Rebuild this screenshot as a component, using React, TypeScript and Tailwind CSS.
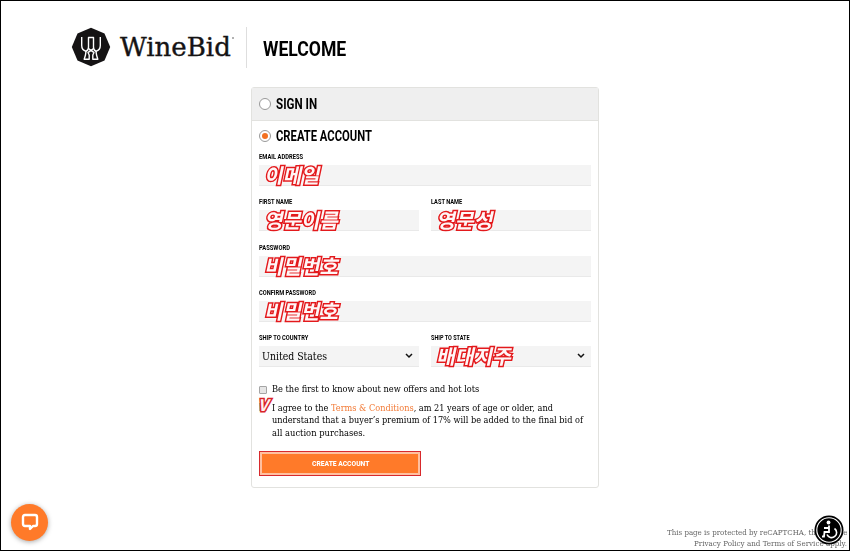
import { useLayoutEffect, useRef } from "react";
import type { ReactNode } from "react";
import { clsx } from "clsx";

interface FitProps {
  width: number;
  className?: string;
  children: ReactNode;
}

// Squeezes a single line of text into a given width.
function Fit({ width, className, children }: FitProps) {
  const ref = useRef<HTMLSpanElement>(null);

  useLayoutEffect(() => {
    const el = ref.current;
    if (el) el.style.transform = `scaleX(${width / el.offsetWidth})`;
  }, [width]);

  return (
    <span className={clsx("block whitespace-nowrap", className)} style={{ width }}>
      <span ref={ref} className="inline-block origin-left">
        {children}
      </span>
    </span>
  );
}

const heading = "font-['Roboto','Liberation_Sans',sans-serif] font-bold text-black";
const serif = "font-['DejaVu_Serif','Liberation_Serif',serif]";

function Note({ width, children }: { width: number; children: ReactNode }) {
  return (
    <Fit
      width={width}
      className="ml-[7px] font-['Noto_Sans_CJK_KR',sans-serif] text-[20px] leading-[20px] font-bold text-[#fff6f6] [-webkit-text-stroke:3px_#e3191c] [paint-order:stroke_fill] drop-shadow-[0_0_1px_#fff]"
    >
      <span className="inline-block -skew-x-12">{children}</span>
    </Fit>
  );
}

interface FieldProps {
  label: string;
  labelWidth: number;
  select?: boolean;
  children?: ReactNode;
}

function Field({ label, labelWidth, select, children }: FieldProps) {
  return (
    <div className="flex h-[45.25px] min-w-0 flex-1 flex-col">
      <Fit width={labelWidth} className={clsx(heading, "h-3.5 text-[7.5px] leading-3")}>
        {label}
      </Fit>
      <div className="flex h-[21px] items-center justify-between border-b border-[#e9e9e9] bg-[#f4f4f4] pr-1.5">
        {children}
        {select && (
          <svg viewBox="0 0 8 6" className="h-1.5 w-2" fill="none" stroke="#111" strokeWidth="1.5">
            <path d="M1 1l3 3 3-3" />
          </svg>
        )}
      </div>
    </div>
  );
}

function Logo() {
  return (
    <svg viewBox="0 0 40 40" className="h-10 w-10" fill="none">
      <path d="M20 .8 33.5 6.4 39.2 20 33.5 33.6 20 39.2 6.5 33.6.8 20 6.5 6.4Z" fill="#151314" />
      <g stroke="#fff" strokeWidth="1.4" strokeLinejoin="round">
        <path d="M10.7 10v8.500c0 3.200 1.500 5 4.300 5.700 2.800-.7 2.500-2.700 2.500-4.700v-9h5v9c0 2 -.3 4 2.500 4.700 2.800-.7 4.300-2.500 4.300-5.700v-8.500" />
        <path d="M17.800 21.500c.6 1.500 3.700 2.500 5.200 4l-1.200 2.500v4.300h5l-1.300-4.300-.5-3.800M22.200 21.500c-.6 1.500-3.700 2.500-5.200 4l1.200 2.500v4.300h-5l1.300-4.300.5-3.800" />
      </g>
    </svg>
  );
}

export default function App() {
  return (
    <div className="relative h-[551px] w-[850px] overflow-hidden border border-black bg-white">
      <header className="flex h-[86px] items-start pt-[26px] pl-[70px]">
        <Logo />
        <Fit
          width={111}
          className={clsx(serif, "ml-[9px] text-[26px] leading-[41px] text-[#151314] [-webkit-text-stroke:0.4px_#151314]")}
        >
          WineBid
        </Fit>
        <span className="mt-2.5 ml-px h-0.5 w-0.5 rounded-full bg-[#999]" />
        <div className="ml-3 h-[41px] w-px bg-[#dedede]" />
        <Fit width={83} className={clsx(heading, "ml-4 text-[21px] leading-[44px]")}>
          WELCOME
        </Fit>
      </header>

      <main className="ml-[250px] h-[401px] w-[348px] rounded-[3px] border border-[#e2e2df] bg-white">
        <div className="flex h-[33px] items-center border-b border-[#e2e2df] bg-[#efefef] pl-[7px]">
          <span className="h-3 w-3 rounded-full border border-[#999] bg-white" />
          <Fit width={41} className={clsx(heading, "ml-[5px] text-[15px] leading-5")}>
            SIGN IN
          </Fit>
        </div>

        <div className="px-[7px]">
          <div className="flex h-[30px] items-center">
            <span className="flex h-3 w-3 items-center justify-center rounded-full border border-[#999] bg-white">
              <span className="h-1.5 w-1.5 rounded-full bg-[#f37021]" />
            </span>
            <Fit width={96} className={clsx(heading, "ml-[5px] text-[15px] leading-5")}>
              CREATE ACCOUNT
            </Fit>
          </div>

          <Field label="EMAIL ADDRESS" labelWidth={44}>
            <Note width={55}>이메일</Note>
          </Field>
          <div className="flex gap-3">
            <Field label="FIRST NAME" labelWidth={33}>
              <Note width={74}>영문이름</Note>
            </Field>
            <Field label="LAST NAME" labelWidth={31}>
              <Note width={56}>영문성</Note>
            </Field>
          </div>
          <Field label="PASSWORD" labelWidth={31}>
            <Note width={74}>비밀번호</Note>
          </Field>
          <Field label="CONFIRM PASSWORD" labelWidth={57}>
            <Note width={74}>비밀번호</Note>
          </Field>
          <div className="flex gap-3">
            <Field label="SHIP TO COUNTRY" labelWidth={49} select>
              <Fit width={65} className={clsx(serif, "ml-[3px] text-[10.5px] leading-5 text-black")}>
                United States
              </Fit>
            </Field>
            <Field label="SHIP TO STATE" labelWidth={39} select>
              <Note width={75}>배대지주</Note>
            </Field>
          </div>

          <div className={clsx(serif, "pt-1.5 text-[9px] leading-[12.5px] text-black")}>
            <div className="flex items-center">
              <span className="mr-[5px] h-2 w-2 rounded-[1px] border border-[#a5a5a5] bg-[#e6e6e6]" />
              <Fit width={207}>Be the first to know about new offers and hot lots</Fit>
            </div>
            <div className="relative mt-1.5 pl-[13px]">
              <span className="absolute top-[1px] left-0 h-2 w-2 border border-[#bbb] bg-[#eee]" />
              <span className="absolute -top-[5px] -left-px font-['Noto_Sans_CJK_KR',sans-serif] text-[16px] leading-[14px] font-bold text-[#fff0f0] italic [-webkit-text-stroke:3px_#d92327] [paint-order:stroke_fill]">
                V
              </span>
              <Fit width={281}>
                I agree to the <span className="text-[#f27a36]">Terms &amp; Conditions</span>, am 21 years of age or older, and
              </Fit>
              <Fit width={311}>understand that a buyer’s premium of 17% will be added to the final bid of</Fit>
              <Fit width={93}>all auction purchases.</Fit>
            </div>
          </div>

          <button className="mt-3 flex h-[25px] w-[162px] border border-[#d8292c] bg-[#ffc0a0] p-0.5">
            <span className="flex h-full w-full items-center justify-center bg-[#ff7a29]">
              <Fit width={57} className="text-left font-['Roboto',sans-serif] text-[8px] leading-3 font-extrabold text-white">
                CREATE ACCOUNT
              </Fit>
            </span>
          </button>
        </div>
      </main>

      <div className="absolute bottom-[9.5px] left-[10px] flex h-[37px] w-[37px] items-center justify-center rounded-full bg-[#ff7a29] shadow-[0_1px_5px_rgba(0,0,0,0.35)]">
        <svg viewBox="0 0 20 20" className="h-5 w-5" fill="none" stroke="#fff" strokeWidth="2.4" strokeLinejoin="round">
          <path d="M5 3h10q2 0 2 2v7q0 2-2 2h-2l-3 3v-3H5q-2 0-2-2V5q0-2 2-2Z" />
        </svg>
      </div>

      <footer className={clsx(serif, "absolute right-0.5 bottom-px flex flex-col items-end text-[8px] leading-[11px] text-[#666]")}>
        <Fit width={180}>This page is protected by reCAPTCHA, the Google</Fit>
        <Fit width={153}>Privacy Policy and Terms of Service apply.</Fit>
      </footer>

      <svg viewBox="0 0 30 30" className="absolute right-[5px] bottom-[5px] h-[30px] w-[30px]" fill="none">
        <circle cx="15" cy="15" r="14.5" fill="#000" />
        <circle cx="15" cy="15" r="12.2" stroke="#fff" strokeWidth="1.1" />
        <circle cx="14.5" cy="7.5" r="1.9" fill="#fff" />
        <path d="M15 10.5v6.5h-4.500l-.5 4.500H8M14.500 13H10" stroke="#fff" strokeWidth="1.8" />
        <path d="M20.500 13.500a5 5 0 1 1-7.500 6" stroke="#fff" strokeWidth="1.6" />
      </svg>
    </div>
  );
}
